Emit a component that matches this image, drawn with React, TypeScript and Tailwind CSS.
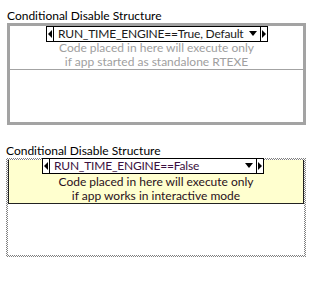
import React from 'react';

function Arrow({ dir }: { dir: 'left' | 'right' | 'down' }) {
    const points =
        dir === 'left' ? '5,0 5,8 1,4' : dir === 'right' ? '1,0 1,8 5,4' : '0,1 8,1 4,6';
    const w = dir === 'down' ? 8 : 6;
    return (
        <svg width={w} height={8} viewBox={`0 0 ${w} 8`} className="block">
            <polygon points={points} fill="#000" />
        </svg>
    );
}

function Selector({ label, textColor }: { label: string; textColor: string }) {
    return (
        <div className="absolute top-0 left-[36px] flex h-[16px] w-[222px] items-stretch border border-black bg-white">
            <div className="flex w-[7px] items-center justify-center border-r border-black">
                <Arrow dir="left" />
            </div>
            <div className={`flex-1 whitespace-nowrap pl-[4px] text-[12px] leading-[14px] tracking-[-0.2px] ${textColor}`}>{label}</div>
            <div className="flex items-center pr-[3px]">
                <Arrow dir="down" />
            </div>
            <div className="flex w-[7px] items-center justify-center border-l border-black">
                <Arrow dir="right" />
            </div>
        </div>
    );
}

export default function App() {
    return (
        <div
            className="h-[282px] w-[325px] bg-white"
            style={{ fontFamily: 'Lato, "Noto Sans", sans-serif' }}
        >
            <div className="pt-[8px] pl-[7px]">
                <div className="whitespace-nowrap text-[12px] leading-[15px] text-black">Conditional Disable Structure</div>
                <div className="relative w-[299px] border-[3px] border-[#a3a3a3] bg-white">
                    <div className="h-[44px] whitespace-nowrap border-b border-[#a3a3a3] pt-[15px] text-center text-[12px] leading-[14px] text-[#a0a0a0]">
                        <div>Code placed in here will execute only</div>
                        <div>if app started as standalone RTEXE</div>
                    </div>
                    <div className="h-[52px]" />
                    <Selector label="RUN_TIME_ENGINE==True, Default" textColor="text-[#1a1a1a]" />
                </div>
            </div>

            <div className="pt-[18px] pl-[6px]">
                <div className="whitespace-nowrap text-[12px] leading-[15px] text-black">Conditional Disable Structure</div>
                <div className="relative w-[300px] bg-[repeating-conic-gradient(#808080_0_25%,#ffffff_0_50%)] bg-[length:2px_2px] p-[2px]">
                    <div className="bg-white">
                        <div className="h-[44px] whitespace-nowrap border border-t-0 border-[#222] bg-[#ffffcf] pt-[15px] text-center text-[12px] leading-[14px] text-[#2a1020]">
                            <div>Code placed in here will execute only</div>
                            <div>if app works in interactive mode</div>
                        </div>
                        <div className="h-[51px]" />
                    </div>
                    <Selector label="RUN_TIME_ENGINE==False" textColor="text-[#3a1040]" />
                </div>
            </div>
        </div>
    );
}
